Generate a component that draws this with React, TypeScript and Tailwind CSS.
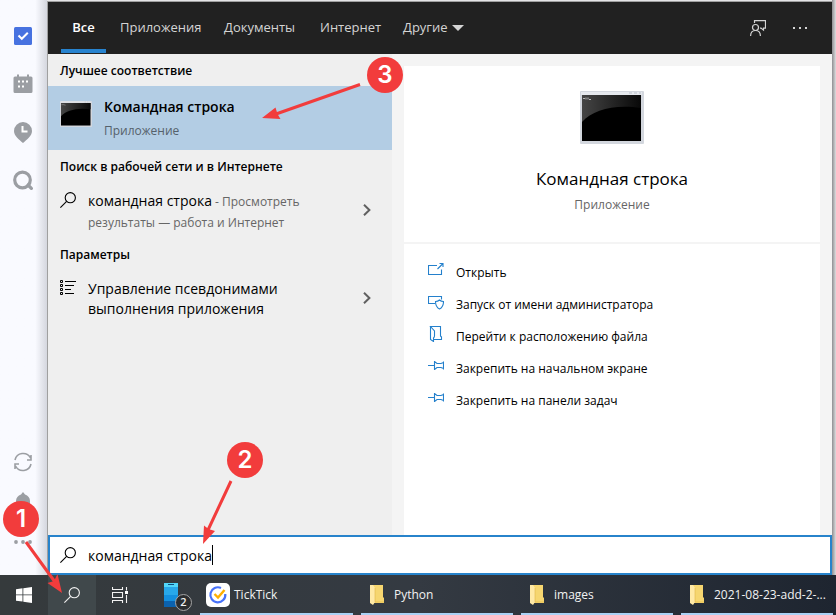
import type { ReactNode } from "react";

const tabs = [
  { label: "Приложения", width: "w-[104px]" },
  { label: "Документы", width: "w-[96px]" },
  { label: "Интернет", width: "w-[83px]" },
];

function ConsoleIcon({ className, id }: { className: string; id: string }) {
  return (
    <svg className={className} viewBox="0 0 64 53" preserveAspectRatio="none" aria-hidden="true">
      <defs>
        <linearGradient id={id} x1="0" y1="0" x2="1" y2="0">
          <stop offset="0" stopColor="#454545" />
          <stop offset="1" stopColor="#080808" />
        </linearGradient>
      </defs>
      <rect width="64" height="53" rx="1" fill="#d3d7de" />
      <rect x="1" y="1" width="61" height="3" fill="#e6e9ee" />
      <path d="M49 2h3M54 2h3M59 2h2" stroke="#b9bfc8" strokeWidth="1" />
      <rect x="2" y="4" width="59" height="46" fill="#000" />
      <path d="M2 4H61V17C34 13 13 19 2 31Z" fill={`url(#${id})`} />
      <path d="M3 7.500h2M6 6.500v2M8 6.500v2M9 8.500h2" stroke="#b8b8b8" strokeWidth="1" />
    </svg>
  );
}

function Magnifier({ className }: { className: string }) {
  return (
    <svg className={className} viewBox="0 0 16 16" fill="none" stroke="currentColor" strokeWidth="1.1" aria-hidden="true">
      <circle cx="10.3" cy="5.7" r="5.1" />
      <path d="M6.6 9.4 0.4 15.6" />
    </svg>
  );
}

function Chevron() {
  return (
    <svg className="h-3 w-2 shrink-0" viewBox="0 0 8 12" fill="none" stroke="#606060" strokeWidth="2" aria-hidden="true">
      <path d="M1 0.8 6.4 6 1 11.2" />
    </svg>
  );
}

function ActionIcon({ children }: { children: ReactNode }) {
  return (
    <svg className="mb-1 h-4 w-4 shrink-0" viewBox="0 0 16 16" fill="none" stroke="#2480cc" strokeWidth="1.1" aria-hidden="true">
      {children}
    </svg>
  );
}

const pin = <path d="M0 7.500h6M6.500 3v9M15.500 3.500v8M6.500 3.500l2.500 2h4l2.500-1M6.500 11.500l2.500-2h4l2.500 1" />;

const actions = [
  {
    label: "Открыть",
    icon: <path d="M9 3.500H.5v9h13V7.500M9.500 7l5-5M11.500 1.500h3.500v3.500" />,
  },
  {
    label: "Запуск от имени администратора",
    icon: <path d="M7 9.500H.5v-7h13v3M7.500 7.500c2 0 3-.5 4-1.500 1 1 2 1.500 4 1.500 0 4-1 6-4 7.500-3-1.500-4-3.500-4-7.500Z" />,
  },
  {
    label: "Перейти к расположению файла",
    icon: <path d="M2.500.500v13l3 2v-3.500q1-1 1-2V5L2.500.500h10v9.500l1 1v2.500h-8" />,
  },
  { label: "Закрепить на начальном экране", icon: pin },
  { label: "Закрепить на панели задач", icon: pin },
];

function Sidebar() {
  return (
    <aside className="flex w-[47px] shrink-0 flex-col items-center justify-between bg-linear-to-r from-[#f9faff] from-75% to-[#d5d7df] pt-[26px] pr-0.5 pb-[31px] text-[#9b9ea3]">
      <div className="flex flex-col items-center gap-7">
        <button aria-label="Задачи" className="h-5 w-5">
          <svg viewBox="0 0 20 20">
            <rect x="1" y="1" width="18" height="18" rx="1.500" fill="#4772e0" />
            <path d="m5.500 9.500 3.300 3.300 6-6" fill="none" stroke="#fff" strokeWidth="2" />
          </svg>
        </button>
        <button aria-label="Календарь" className="h-5 w-5">
          <svg viewBox="0 0 20 20">
            <path d="M2 2.500h2V.5h2v2h8v-2h2v2h2q1.500 0 1.500 1.500v13.500q0 1.500-1.500 1.500H2Q.5 19 .5 17.500V4Q.5 2.500 2 2.500Z" fill="currentColor" />
            <path d="M9 7.500h2M13 7.500h2M5 7.500h2M5 12.500h2M9 12.500h2" stroke="#fff" strokeWidth="2" />
          </svg>
        </button>
        <button aria-label="Фокус" className="h-5 w-5">
          <svg viewBox="0 0 20 21">
            <path d="M10 0a9 9 0 0 1 9 9c0 5-5 8.500-9 12C6 17.500 1 14 1 9a9 9 0 0 1 9-9Z" fill="currentColor" />
            <path d="M9.500 4v5.500h5" fill="none" stroke="#fff" strokeWidth="2" />
          </svg>
        </button>
        <button aria-label="Поиск" className="h-5 w-5">
          <svg viewBox="0 0 20 20" fill="none" stroke="currentColor" strokeWidth="3.200">
            <circle cx="9.500" cy="10" r="7.800" />
            <path d="m14 14 5.500 5.500" />
          </svg>
        </button>
      </div>
      <div className="flex flex-col items-center">
        <button aria-label="Синхронизация" className="mb-5 h-5 w-5">
          <svg viewBox="0 0 20 20" fill="none" stroke="currentColor" strokeWidth="1.600">
            <path d="M2 8a8.300 8.300 0 0 1 15.500-2M18 12a8.300 8.300 0 0 1-15.500 2M18 3v5h-4M2 17v-5h4" />
          </svg>
        </button>
        <button aria-label="Уведомления" className="mb-7 h-5 w-5">
          <svg viewBox="0 0 20 20" fill="currentColor">
            <path d="M10 0 12 2.500C15 3.500 17 6 17 9v7H3V9c0-3 2-5.500 5-6.500Z" />
          </svg>
        </button>
        <button aria-label="Ещё" className="h-1 w-5">
          <svg className="h-1 w-5" viewBox="0 0 20 4" fill="currentColor">
            <circle cx="3" cy="2" r="1.900" />
            <circle cx="10" cy="2" r="1.900" />
            <circle cx="17" cy="2" r="1.900" />
          </svg>
        </button>
      </div>
    </aside>
  );
}

function Header() {
  return (
    <header className="flex h-[52px] shrink-0 items-stretch bg-[#212121] pr-6 pl-[13px] text-[13px] text-[#d4d4d4]">
      <nav className="flex flex-1">
        <button className="mr-px mb-px w-[45px] border-b-4 border-[#2783cf] pt-1 font-semibold text-white">Все</button>
        {tabs.map((t) => (
          <button key={t.label} className={`${t.width} pl-[13px] text-left`}>
            {t.label}
          </button>
        ))}
        <button className="flex items-center gap-1 pl-[13px]">
          Другие
          <svg className="h-1.5 w-3" viewBox="0 0 10 5" fill="currentColor" aria-hidden="true">
            <path d="M0 0h10L5 5Z" />
          </svg>
        </button>
      </nav>
      <button aria-label="Отправить отзыв" className="mr-[27px]">
        <svg className="h-4 w-4" viewBox="0 0 16 16" fill="none" stroke="currentColor" strokeWidth="1.200">
          <path d="M4.500 3V.6h11v7.500h-2v2L11 8.100h-1" />
          <circle cx="5.500" cy="7.500" r="3" />
          <path d="M.6 16c0-3.500 2-5.500 4.900-5.500s4.900 2 4.900 5.500" />
        </svg>
      </button>
      <button aria-label="Параметры">
        <svg className="h-0.5 w-[15px]" viewBox="0 0 15 2" fill="currentColor">
          <path d="M0 0h2v2H0zM6 0h2v2H6zM12 0h2v2h-2z" />
        </svg>
      </button>
    </header>
  );
}

function SectionTitle({ children }: { children: ReactNode }) {
  return <h2 className="flex h-8 items-center pt-0.5 pl-3 text-[12px] font-semibold">{children}</h2>;
}

function Results() {
  return (
    <section className="w-[344px] shrink-0 bg-[#efefef]">
      <SectionTitle>Лучшее соответствие</SectionTitle>
      <button className="flex h-16 w-full gap-3 bg-[#b3cde4] pt-2.5 pl-3 text-left">
        <ConsoleIcon id="console-small" className="mt-[5px] h-[26px] w-8 shrink-0" />
        <span>
          <span className="block text-[14px] leading-[22px] font-semibold">Командная строка</span>
          <span className="block text-[12px] leading-[26px] text-[#56616b]">Приложение</span>
        </span>
      </button>
      <SectionTitle>Поиск в рабочей сети и в Интернете</SectionTitle>
      <button className="flex h-14 w-full items-center pr-[21px] pl-3 text-left">
        <Magnifier className="mr-3 mb-5 h-4 w-4 shrink-0" />
        <span className="flex-1 pt-0.5 text-[12px] leading-[21px] text-[#666]">
          <span className="text-[14px] text-black">командная строка</span> - Просмотреть
          <br />
          результаты — работа и Интернет
        </span>
        <Chevron />
      </button>
      <SectionTitle>Параметры</SectionTitle>
      <button className="flex h-14 w-full items-center pr-[21px] pl-3 text-left">
        <svg className="mr-3 mb-5 h-4 w-4 shrink-0" viewBox="0 0 16 16" fill="none" stroke="#000" aria-hidden="true">
          <path d="M.5.500h2v2h-2zM.5 4.500h2v2h-2zM.5 8.500h2v2h-2zM.5 12.500h2v2h-2z" />
          <path d="M5 1.500h11M5 5.500h9M5 9.500h6M5 13.500h9" />
        </svg>
        <span className="flex-1 pt-0.5 text-[14px] leading-5">
          Управление псевдонимами
          <br />
          выполнения приложения
        </span>
        <Chevron />
      </button>
    </section>
  );
}

function Details() {
  return (
    <section className="flex flex-1 flex-col bg-[#f4f4f4] px-3 pt-3">
      <div className="mb-0.5 flex h-44 flex-col items-center bg-white pt-[25px]">
        <ConsoleIcon id="console-large" className="h-[53px] w-16" />
        <h1 className="mt-[22px] text-[17px] leading-[26px]">Командная строка</h1>
        <p className="text-[12px] leading-[26px] text-[#666]">Приложение</p>
      </div>
      <div className="flex-1 bg-white pt-3">
        {actions.map((a) => (
          <button key={a.label} className="flex h-8 w-full items-center gap-3 pl-6 text-left text-[12px]">
            <ActionIcon>{a.icon}</ActionIcon>
            <span className="pt-0.5">{a.label}</span>
          </button>
        ))}
      </div>
    </section>
  );
}

function Folder() {
  return (
    <svg className="h-5 w-4" viewBox="0 0 16 20" aria-hidden="true">
      <path d="M2 0h12v12l1 1v5H2Z" fill="#f6d670" />
      <path d="M1 0h3l2 3v14l-2 3-3-2Z" fill="#ffe9a6" />
      <path d="M6 3v14h9" fill="none" stroke="#e0b547" strokeWidth=".6" />
    </svg>
  );
}

function Taskbar() {
  return (
    <footer className="flex h-10 shrink-0 bg-linear-to-r from-[#353a3c] via-[#343a42] to-[#1e2530] text-[12px] text-[#f2f2f2]">
      <button aria-label="Пуск" className="flex w-12 items-center justify-center">
        <svg className="h-4 w-4" viewBox="0 0 16 16" fill="#fff">
          <path d="M0 2.200 6.500 1.300v6.200H0zM7.300 1.200 16 0v7.500H7.300zM0 8.300h6.500v6.300L0 13.700zM7.300 8.300H16V16l-8.700-1.200z" />
        </svg>
      </button>
      <button aria-label="Поиск" className="flex w-12 items-center justify-center bg-[#40484b]">
        <Magnifier className="h-4 w-4" />
      </button>
      <button aria-label="Представление задач" className="flex w-12 items-center justify-center">
        <svg className="h-4 w-4" viewBox="0 0 16 16" fill="none" stroke="#f2f2f2" strokeWidth="1.100">
          <path d="M.5 0v2.500h10V0M.5 16v-2.500h10V16M.5 5.500h10v5H.5zM14.500 0v3.500M14.500 8v8" />
          <path d="M13 4h3v3h-3z" fill="#fff" stroke="none" />
        </svg>
      </button>
      <button aria-label="Ваш телефон" className="relative flex w-14 items-center pl-5">
        <svg className="h-6 w-3.5" viewBox="0 0 14 24">
          <path d="M0 0h14v24H0z" fill="#0b62ae" />
          <path d="M0 0h14v18H0z" fill="#1490df" />
          <path d="M0 0h14v12H0z" fill="#28a8ea" />
          <path d="M0 0h14v4H0z" fill="#51d6fa" />
          <path d="M4 1.500h6" stroke="#0b4f80" />
        </svg>
        <span className="absolute top-[19px] left-[31px] flex h-[17px] w-[17px] items-center justify-center rounded-full border border-[#a5a5a5] bg-[#2b2d2f] text-[11px] font-semibold">
          2
        </span>
      </button>
      <div className="flex flex-1 gap-2 overflow-hidden">
        <button className="flex w-[153px] shrink-0 items-center gap-1 border-b-2 border-[#a9d1f5] pt-0.5 pl-1.5">
          <svg className="h-6 w-6" viewBox="0 0 24 24" fill="none">
            <rect width="24" height="24" rx="5" fill="#fff" />
            <path d="M15 5A7.500 7.500 0 1 0 19.300 11" stroke="#4772fa" strokeWidth="2.200" />
            <path d="m8.500 11 3.500 3.500L18.500 7" stroke="#ffb000" strokeWidth="2.400" />
          </svg>
          TickTick
        </button>
        {["Python", "images", "2021-08-23-add-2-..."].map((name) => (
          <button key={name} className="flex w-38 shrink-0 items-center gap-[9px] border-b-2 border-[#a9d1f5] pt-0.5 pl-2 whitespace-nowrap">
            <Folder />
            {name}
          </button>
        ))}
      </div>
    </footer>
  );
}

function Callouts() {
  const badge =
    "absolute flex h-9 w-9 items-center justify-center rounded-full bg-[#f23c3c] font-[Inter,sans-serif] text-[24px] font-semibold text-white";
  return (
    <div className="pointer-events-none absolute inset-0 overflow-hidden">
      <svg className="absolute top-0 left-0 h-[615px] w-[836px]" viewBox="0 0 836 615" fill="#f23c3c" stroke="#f23c3c" aria-hidden="true">
        <path d="M26 542 55 582M231 481 208 530M360 84.500 276 114" strokeWidth="3" />
        <path d="M62 593 47.500 583 54 581 57.500 574ZM203 544 204 525.500 208.500 529 215 531ZM262 118 275.500 107.500 277.500 114 280.500 119Z" stroke="none" />
      </svg>
      <span className={`${badge} top-[501px] left-[3px]`}>1</span>
      <span className={`${badge} top-[442px] left-[227px]`}>2</span>
      <span className={`${badge} top-[57px] left-[367px]`}>3</span>
    </div>
  );
}

export default function App() {
  return (
    <div className="relative flex h-screen flex-col overflow-hidden bg-[#e4e4e6] font-['Open_Sans','Noto_Sans',sans-serif] text-black">
      <div className="flex min-h-0 flex-1">
        <Sidebar />
        <main className="mt-px flex min-w-0 flex-1 flex-col border-t border-l border-[#a0a0a0]">
          <Header />
          <div className="flex min-h-0 flex-1">
            <Results />
            <Details />
          </div>
          <label className="flex h-10 shrink-0 items-center gap-3 border-2 border-[#2783cb] bg-white pl-2.5">
            <Magnifier className="h-4 w-4 shrink-0" />
            <span className="flex flex-1 items-center">
              <input aria-label="Поиск" className="field-sizing-content text-[14px] outline-none" defaultValue="командная строка" />
              <span className="h-5 w-px bg-black" />
            </span>
          </label>
        </main>
        <div className="w-1 shrink-0 bg-linear-to-r from-[#8f8f92] to-[#dedee0]" />
      </div>
      <Taskbar />
      <Callouts />
    </div>
  );
}
